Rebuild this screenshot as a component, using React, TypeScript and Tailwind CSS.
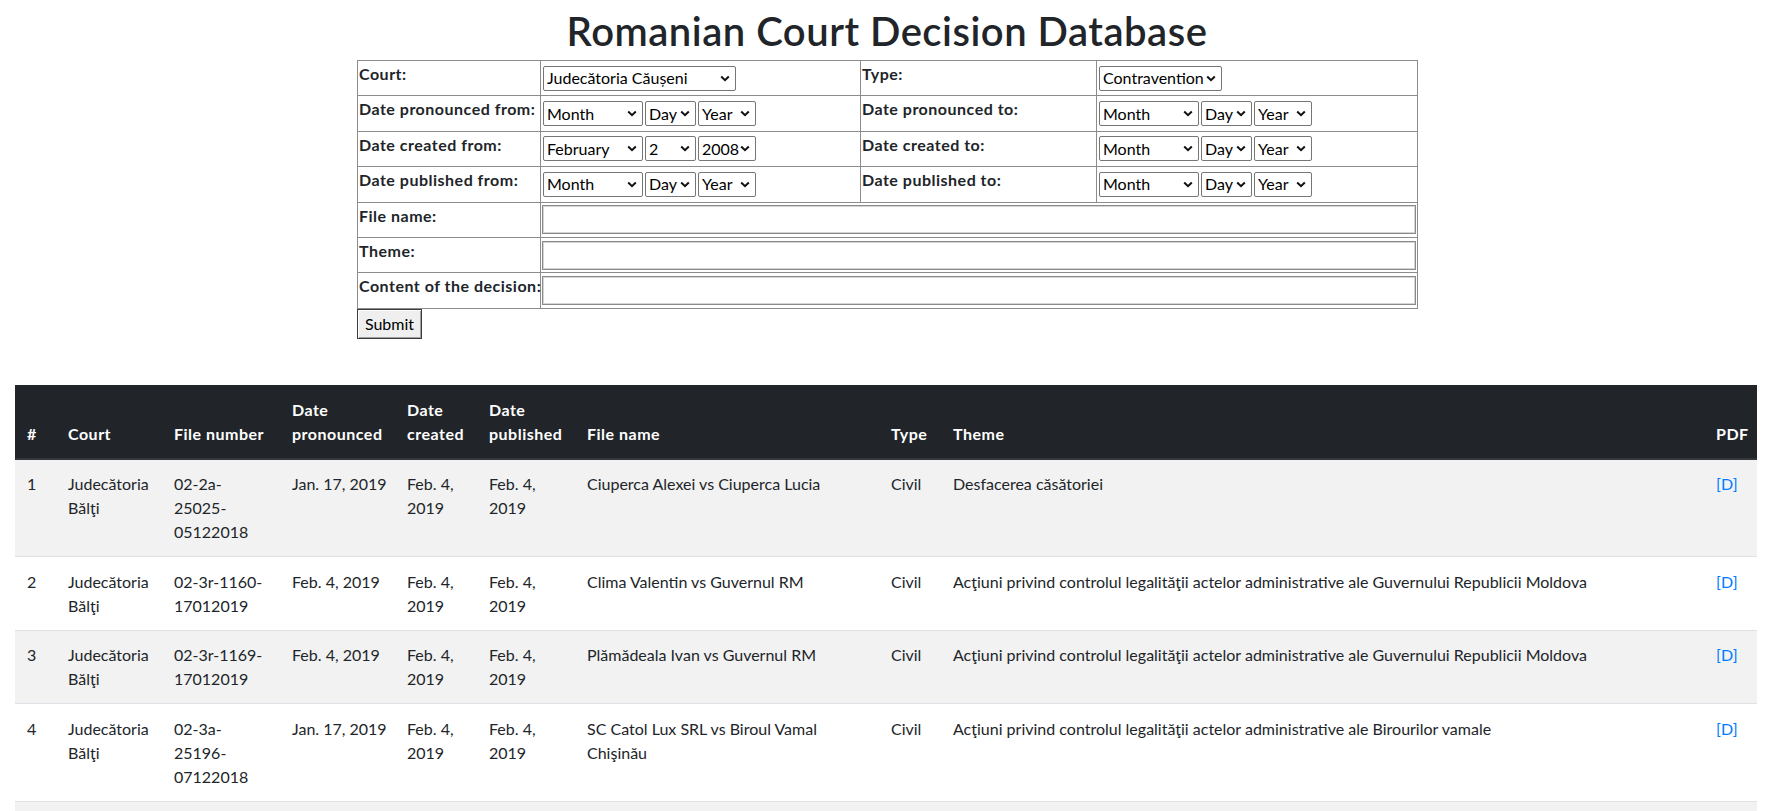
import React from 'react';

type Row = {
  id: number;
  court: string;
  fileNumber: string;
  pronounced: string;
  created: string;
  published: string;
  fileName: string;
  type: string;
  theme: string;
};

const ROWS: Row[] = [
  {
    id: 1,
    court: 'Judecătoria Bălţi',
    fileNumber: '02-2a-25025-05122018',
    pronounced: 'Jan. 17, 2019',
    created: 'Feb. 4, 2019',
    published: 'Feb. 4, 2019',
    fileName: 'Ciuperca Alexei vs Ciuperca Lucia',
    type: 'Civil',
    theme: 'Desfacerea căsătoriei',
  },
  {
    id: 2,
    court: 'Judecătoria Bălţi',
    fileNumber: '02-3r-1160-17012019',
    pronounced: 'Feb. 4, 2019',
    created: 'Feb. 4, 2019',
    published: 'Feb. 4, 2019',
    fileName: 'Clima Valentin vs Guvernul RM',
    type: 'Civil',
    theme: 'Acţiuni privind controlul legalităţii actelor administrative ale Guvernului Republicii Moldova',
  },
  {
    id: 3,
    court: 'Judecătoria Bălţi',
    fileNumber: '02-3r-1169-17012019',
    pronounced: 'Feb. 4, 2019',
    created: 'Feb. 4, 2019',
    published: 'Feb. 4, 2019',
    fileName: 'Plămădeala Ivan vs Guvernul RM',
    type: 'Civil',
    theme: 'Acţiuni privind controlul legalităţii actelor administrative ale Guvernului Republicii Moldova',
  },
  {
    id: 4,
    court: 'Judecătoria Bălţi',
    fileNumber: '02-3a-25196-07122018',
    pronounced: 'Jan. 17, 2019',
    created: 'Feb. 4, 2019',
    published: 'Feb. 4, 2019',
    fileName: 'SC Catol Lux SRL vs Biroul Vamal Chişinău',
    type: 'Civil',
    theme: 'Acţiuni privind controlul legalităţii actelor administrative ale Birourilor vamale',
  },
];

function Chevron() {
  return (
    <svg width="10" height="7" viewBox="0 0 10 7" className="shrink-0">
      <path d="M1.2 1.5 L5 5.2 L8.8 1.5" fill="none" stroke="#111" strokeWidth="2" />
    </svg>
  );
}

function Select({ value, className }: { value: string; className: string }) {
  return (
    <span
      className={`inline-flex items-center justify-between h-[25px] pl-[3px] pr-[5px] border border-[#767676] rounded-[2px] bg-white text-[16px] leading-none text-black ${className}`}
    >
      <span className="whitespace-nowrap">{value}</span>
      <Chevron />
    </span>
  );
}

function DateSelects({ month = 'Month', day = 'Day', year = 'Year' }: { month?: string; day?: string; year?: string }) {
  return (
    <div className="flex items-center gap-[2px] pl-[1px]">
      <Select value={month} className="w-[100px]" />
      <Select value={day} className="w-[51px]" />
      <Select value={year} className="w-[58px]" />
    </div>
  );
}

function Label({ children }: { children: React.ReactNode }) {
  return (
    <label className="inline-block mb-[8.4px] font-bold tracking-[0.5px] leading-6 whitespace-nowrap">
      {children}
    </label>
  );
}

function TextInput() {
  return (
    <input
      type="text"
      className="block w-full h-[29px] bg-white border border-[#8a8a8a] shadow-[inset_0_0_0_1px_#d4d4d4] outline-none"
    />
  );
}

const labelCell = 'p-[1px] border border-[#8c8c8c] align-middle text-left';
const valueCell = 'p-[1px] border border-[#8c8c8c] align-middle';

function SearchForm() {
  return (
    <form className="w-[1060px] mx-auto">
      <table className="w-full border-collapse border border-[#3c3c3c] table-fixed">
        <colgroup>
          <col className="w-[183px]" />
          <col className="w-[320px]" />
          <col className="w-[236px]" />
          <col className="w-[321px]" />
        </colgroup>
        <tbody>
          <tr>
            <td className={labelCell}><Label>Court:</Label></td>
            <td className={valueCell}>
              <div className="pl-[1px]"><Select value="Judecătoria Căușeni" className="w-[193px]" /></div>
            </td>
            <td className={labelCell}><Label>Type:</Label></td>
            <td className={valueCell}>
              <div className="pl-[1px]"><Select value="Contravention" className="w-[123px]" /></div>
            </td>
          </tr>
          <tr>
            <td className={labelCell}><Label>Date pronounced from:</Label></td>
            <td className={valueCell}><DateSelects /></td>
            <td className={labelCell}><Label>Date pronounced to:</Label></td>
            <td className={valueCell}><DateSelects /></td>
          </tr>
          <tr>
            <td className={labelCell}><Label>Date created from:</Label></td>
            <td className={valueCell}><DateSelects month="February" day="2" year="2008" /></td>
            <td className={labelCell}><Label>Date created to:</Label></td>
            <td className={valueCell}><DateSelects /></td>
          </tr>
          <tr>
            <td className={labelCell}><Label>Date published from:</Label></td>
            <td className={valueCell}><DateSelects /></td>
            <td className={labelCell}><Label>Date published to:</Label></td>
            <td className={valueCell}><DateSelects /></td>
          </tr>
          <tr>
            <td className={labelCell}><Label>File name:</Label></td>
            <td className={valueCell} colSpan={3}><TextInput /></td>
          </tr>
          <tr>
            <td className={labelCell}><Label>Theme:</Label></td>
            <td className={valueCell} colSpan={3}><TextInput /></td>
          </tr>
          <tr>
            <td className={labelCell}><Label>Content of the decision:</Label></td>
            <td className={valueCell} colSpan={3}><TextInput /></td>
          </tr>
        </tbody>
      </table>
      <button
        type="submit"
        className="block h-[30px] w-[65px] bg-[#efefef] border border-[#3b3b3b] shadow-[inset_1px_1px_0_#fff,inset_-1px_-1px_0_#a0a0a0] text-[16px] leading-none text-black"
      >
        Submit
      </button>
    </form>
  );
}

const th = 'px-3 pt-[13px] pb-[12px] text-left align-bottom font-bold tracking-[0.5px] border-b-2 border-[#32383e]';
const td = 'px-3 pt-[12.5px] pb-[12px] align-top border-t border-[#dee2e6]';

function ResultsTable() {
  return (
    <table className="w-[1742px] table-fixed border-collapse text-[#212529]">
      <thead className="bg-[#212529] text-white">
        <tr>
          <th className={`${th} w-[41px]`}>#</th>
          <th className={`${th} w-[106px]`}>Court</th>
          <th className={`${th} w-[118px]`}>File number</th>
          <th className={`${th} w-[115px]`}>Date pronounced</th>
          <th className={`${th} w-[82px]`}>Date created</th>
          <th className={`${th} w-[98px]`}>Date published</th>
          <th className={`${th} w-[304px]`}>File name</th>
          <th className={`${th} w-[62px]`}>Type</th>
          <th className={`${th} w-[763px]`}>Theme</th>
          <th className={`${th} w-[53px]`}>PDF</th>
        </tr>
      </thead>
      <tbody>
        {ROWS.map((r, i) => (
          <tr key={r.id} className={i % 2 === 0 ? 'bg-[#f2f2f2]' : 'bg-white'}>
            <td className={td}>{r.id}</td>
            <td className={td}>{r.court}</td>
            <td className={td}>{r.fileNumber}</td>
            <td className={`${td} whitespace-nowrap`}>{r.pronounced}</td>
            <td className={td}>{r.created}</td>
            <td className={td}>{r.published}</td>
            <td className={td}>{r.fileName}</td>
            <td className={td}>{r.type}</td>
            <td className={td}>{r.theme}</td>
            <td className={td}>
              <a href="#" className="text-[#007bff]">[D]</a>
            </td>
          </tr>
        ))}
        {/* next striped row, its text falls below the fold */}
        <tr className="bg-[#f2f2f2]">
          <td className={`${td} h-[48px]`} colSpan={10} />
        </tr>
      </tbody>
    </table>
  );
}

export default function App() {
  return (
    <div className="h-[811px] overflow-hidden bg-white font-[Lato,sans-serif] text-[16px] leading-6 text-[#212529]">
      <div className="w-[1774px]">
        <h1 className="text-center text-[40px] leading-[48px] font-semibold tracking-[0.5px] mt-[7px] mb-[5px]">
          Romanian Court Decision Database
        </h1>
        <SearchForm />
        <div className="pl-[15px] mt-[46px]">
          <ResultsTable />
        </div>
      </div>
    </div>
  );
}
